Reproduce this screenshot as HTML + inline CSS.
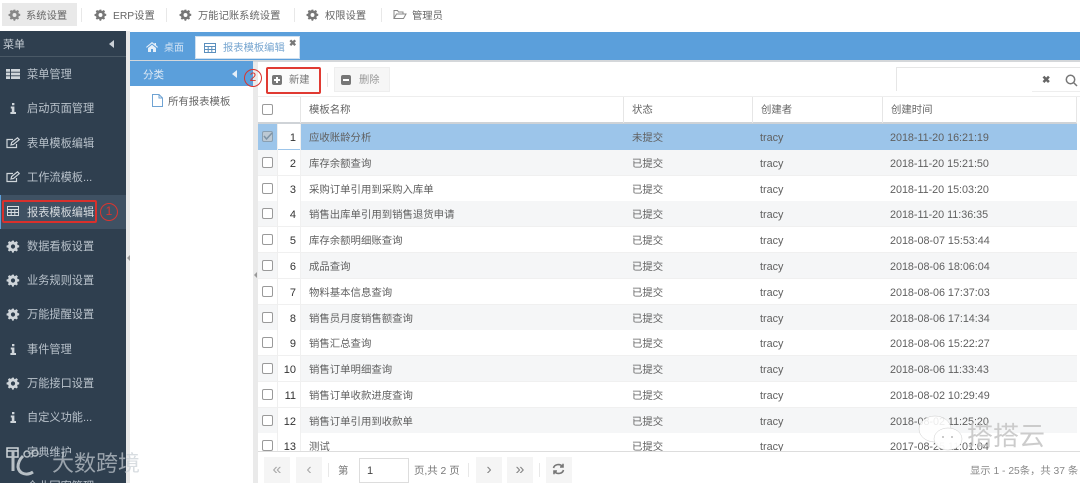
<!DOCTYPE html>
<html><head><meta charset="utf-8"><style>
html,body{margin:0;padding:0;width:1080px;height:483px;overflow:hidden;background:#fff}
#w{position:relative;width:1080px;height:483px;overflow:hidden;filter:blur(.35px);font:10.4px "Liberation Sans","Noto Sans CJK SC",sans-serif;color:#555}
#w div,#w svg,#w span.a{position:absolute}
.t{white-space:nowrap;line-height:14px}
.m{color:#666;font-size:10.3px;top:10px}
.sep{width:1px;height:14px;top:8px;background:#e8e8e8}
.s{left:27px;color:#b9c2cb;font-size:11.2px;white-space:nowrap;line-height:14px;transform:translateY(1px)}
.row{left:258px;width:819px;height:26px;background:#fff;border-bottom:1px solid #f0f0f0;box-sizing:border-box}
.row.e{background:#f5f6f7}
.cb{left:4px;top:7px;width:9px;height:9px;border:1px solid #9a9a9a;border-radius:2px;background:#fff}
.n{left:19px;width:19px;text-align:right;top:7px;color:#333;font-size:11px;line-height:14px}
.c{top:7px;line-height:14px;white-space:nowrap;color:#606060}
.c1{left:51px;top:8px}.c2{left:374px;top:8px}.c3{left:502px;font-size:10.8px}.c4{left:632px;font-size:10.8px;letter-spacing:-.03px}
.numcell{left:19px;top:0;width:23px;height:25px;background:#fff}
.th{top:97px;height:26px;line-height:27px;color:#666;white-space:nowrap}
.vl{top:97px;width:1px;height:26px;background:#e6e6e6}
.pb{top:457px;height:26px;background:#f5f5f5;color:#aaa;text-align:center;line-height:25px;font-size:16px}
.ci{border:1.300px solid #d9352f;border-radius:50%;color:#d9352f;text-align:center;box-sizing:border-box;width:18px;height:18px;line-height:15px;font-size:12px}
</style></head><body><div id="w">
<svg width="0" height="0" style="width:0;height:0"><defs>
<g id="g"><path fill-rule="evenodd" d="M4.200 0h1.600l.3 1.400 1-.4.9-.6 1.200 1.200-.7 1.100.5 1 1.300.3v1.700l-1.300.3-.5 1 .7 1.100-1.200 1.200-1.100-.7-1 .4-.3 1.300H4.200l-.3-1.300-1-.4-1.100.7L.6 8.200l.7-1.100-.5-1L-.5 5.800v-1.700l1.300-.3.5-1-.7-1.100L1.800.4l1.100.6 1-.4zM5 3.200a1.800 1.800 0 1 0 0 3.600 1.800 1.800 0 0 0 0-3.600z"/></g>
</defs></svg>

<!-- top menu -->
<div style="left:2px;top:3px;width:75px;height:23px;background:#e9e9e9"></div>
<svg style="left:8px;top:9px" width="13" height="12" viewBox="-1 0 12 10" fill="#888"><use href="#g"/></svg>
<div class="t m" style="left:26px">系统设置</div><div class="sep" style="left:81px"></div>
<svg style="left:94px;top:9px" width="13" height="12" viewBox="-1 0 12 10" fill="#777"><use href="#g"/></svg>
<div class="t m" style="left:113px">ERP设置</div><div class="sep" style="left:166px"></div>
<svg style="left:179px;top:9px" width="13" height="12" viewBox="-1 0 12 10" fill="#777"><use href="#g"/></svg>
<div class="t m" style="left:198px">万能记账系统设置</div><div class="sep" style="left:294px"></div>
<svg style="left:306px;top:9px" width="13" height="12" viewBox="-1 0 12 10" fill="#777"><use href="#g"/></svg>
<div class="t m" style="left:325px">权限设置</div><div class="sep" style="left:381px"></div>
<svg style="left:393px;top:9px" width="14" height="11" viewBox="0 0 14 11" fill="none" stroke="#888"><path d="M1 9.500V1.500h3.500l1 1.500h4.500v2M1 9.500h9.500l2.500-4.500H3.500z"/></svg>
<div class="t m" style="left:412px">管理员</div>

<!-- sidebar -->
<div style="left:0;top:31px;width:126px;height:452px;background:#2f3f4f"></div>
<div style="left:0;top:56px;width:126px;height:1px;background:#4a5966"></div>
<div class="t" style="left:3px;top:38px;color:#c5ccd3;font-size:11px">菜单</div>
<div style="left:109px;top:40px;width:0;height:0;border:4px solid transparent;border-right:5px solid #ccd2d8;border-left:0"></div>
<div style="left:126px;top:31px;width:4px;height:452px;background:#e9e9e9"></div>
<div style="left:127px;top:255px;width:0;height:0;border:3px solid transparent;border-right:3px solid #999;border-left:0"></div>
<div style="left:0;top:195px;width:126px;height:34px;background:#3f5163"></div>
<div style="left:0;top:195px;width:1px;height:34px;background:#5b9fdb"></div>

<svg style="left:6px;top:69px" width="14" height="10" viewBox="0 0 14 10" fill="#cfd5da"><path d="M0 0h4v2.800H0zM5 0h9v2.800H5zM0 3.600h4v2.800H0zM5 3.600h9v2.800H5zM0 7.200h4V10H0zM5 7.200h9V10H5z"/></svg>
<div class="s" style="top:67px">菜单管理</div>
<svg style="left:10px;top:103px" width="6" height="11" viewBox="0 0 6 11" fill="#cfd5da"><path d="M2 0h2.400v2.200H2zM.8 3.500h3.600v5.500H6v2H.4V9h1.400V5.500h-1z"/></svg>
<div class="s" style="top:101px">启动页面管理</div>
<svg style="left:6px;top:137px" width="14" height="12" viewBox="0 0 14 12" fill="none" stroke="#cfd5da" stroke-width="1.200"><path d="M10.500 7v3.500H1V2.500h6M5 8l.6-2.500L11.500.8l1.800 1.800-5.800 4.800z"/></svg>
<div class="s" style="top:136px">表单模板编辑</div>
<svg style="left:6px;top:171px" width="14" height="12" viewBox="0 0 14 12" fill="none" stroke="#cfd5da" stroke-width="1.200"><path d="M10.500 7v3.500H1V2.500h6M5 8l.6-2.500L11.500.8l1.800 1.800-5.800 4.800z"/></svg>
<div class="s" style="top:170px">工作流模板...</div>
<svg style="left:7px;top:206px" width="12" height="10" viewBox="0 0 12 10" fill="none" stroke="#d8dde1"><path d="M.5.500h11v9H.5zM.5 3.500h11M.5 6.500h11M4.200 3.500v6M7.800 3.500v6"/></svg>
<div class="s" style="top:205px;color:#d5dade">报表模板编辑</div>
<svg style="left:6px;top:240px" width="14" height="13" viewBox="-1 0 12 10" fill="#cfd5da"><use href="#g"/></svg>
<div class="s" style="top:239px">数据看板设置</div>
<svg style="left:6px;top:274px" width="14" height="13" viewBox="-1 0 12 10" fill="#cfd5da"><use href="#g"/></svg>
<div class="s" style="top:273px">业务规则设置</div>
<svg style="left:6px;top:308px" width="14" height="13" viewBox="-1 0 12 10" fill="#cfd5da"><use href="#g"/></svg>
<div class="s" style="top:307px">万能提醒设置</div>
<svg style="left:10px;top:344px" width="6" height="11" viewBox="0 0 6 11" fill="#cfd5da"><path d="M2 0h2.400v2.200H2zM.8 3.500h3.600v5.500H6v2H.4V9h1.400V5.500h-1z"/></svg>
<div class="s" style="top:342px">事件管理</div>
<svg style="left:6px;top:377px" width="14" height="13" viewBox="-1 0 12 10" fill="#cfd5da"><use href="#g"/></svg>
<div class="s" style="top:376px">万能接口设置</div>
<svg style="left:10px;top:412px" width="6" height="11" viewBox="0 0 6 11" fill="#cfd5da"><path d="M2 0h2.400v2.200H2zM.8 3.500h3.600v5.500H6v2H.4V9h1.400V5.500h-1z"/></svg>
<div class="s" style="top:410px">自定义功能...</div>
<svg style="left:6px;top:447px" width="13" height="11" viewBox="0 0 13 11" fill="none" stroke="#cfd5da" stroke-width="1.500"><path d="M1 1h11v9H1zM1 4h11"/></svg>
<div class="s" style="top:445px">字典维护</div>
<div class="s" style="top:479px">企业回密管理</div>

<div style="left:2px;top:200px;width:91px;height:19px;border:2px solid #d9302c;border-radius:2px"></div>
<div class="ci" style="left:100px;top:203px">1</div>

<!-- header tabs -->
<div style="left:130px;top:32px;width:950px;height:28px;background:#5b9fdb"></div>
<div style="left:130px;top:60px;width:950px;height:2px;background:#d4d7da"></div>
<svg style="left:146px;top:42px" width="12" height="10" viewBox="0 0 12 10" fill="#e6eff8"><path d="M6 0L0 5l.7.800L6 1.500l5.300 4.300.7-.8-2-1.700V1H8.500v1zM2 6v4h3V7h2v3h3V6L6 2.700z"/></svg>
<div class="t" style="left:164px;top:42px;color:#cfe1f3;font-size:10px">桌面</div>
<div style="left:195px;top:36px;width:105px;height:23px;background:#fff;border:1px solid #cfe0f0;box-sizing:border-box"></div>
<svg style="left:204px;top:43px" width="12" height="10" viewBox="0 0 12 10" fill="none" stroke="#5b8fbd"><path d="M.5.500h11v9H.5zM.5 3.500h11M.5 6.500h11M4.200 3.500v6M7.800 3.500v6"/></svg>
<div class="t" style="left:223px;top:42px;color:#76a5d0;font-size:10.3px">报表模板编辑</div>
<div class="t" style="left:289px;top:36px;color:#777;font-size:9px;font-weight:bold">✖</div>

<!-- category panel -->
<div style="left:130px;top:61px;width:123px;height:25px;background:#5b9fdb"></div>
<div class="t" style="left:143px;top:68px;color:#dfeaf5;font-size:10.5px">分类</div>
<div style="left:232px;top:70px;width:0;height:0;border:4px solid transparent;border-right:5px solid #e6eff8;border-left:0"></div>
<svg style="left:152px;top:94px" width="11" height="13" viewBox="0 0 11 13" fill="none" stroke="#6fa3d3"><path d="M.5.500h6.500l3.500 3.500v8.500H.5zM7 .500V4h3.500"/></svg>
<div class="t" style="left:168px;top:96px;color:#666">所有报表模板</div>
<div style="left:253px;top:62px;width:5px;height:421px;background:#eaeaea"></div>
<div style="left:254px;top:272px;width:0;height:0;border:3px solid transparent;border-right:3px solid #999;border-left:0"></div>

<!-- toolbar -->
<div style="left:266px;top:67px;width:51px;height:23px;border:2px solid #e03a32;border-radius:2px;background:#fbfbfb"></div>
<div class="ci" style="left:244px;top:69px">2</div>
<svg style="left:272px;top:75px" width="10" height="10" viewBox="0 0 10 10"><rect width="10" height="10" rx="2" fill="#777"/><path d="M4 2h2v2h2v2H6v2H4V6H2V4h2z" fill="#fff"/></svg>
<div class="t" style="left:289px;top:74px;color:#777;font-size:10.3px">新建</div>
<div class="sep" style="left:327px;top:73px"></div>
<div style="left:334px;top:67px;width:56px;height:25px;background:#f6f6f6;border:1px solid #eee;box-sizing:border-box"></div>
<svg style="left:341px;top:75px" width="10" height="10" viewBox="0 0 10 10"><rect width="10" height="10" rx="2" fill="#777"/><path d="M2 4h6v2H2z" fill="#fff"/></svg>
<div class="t" style="left:359px;top:74px;color:#999;font-size:10.3px">删除</div>
<div style="left:896px;top:67px;width:184px;height:24px;border-left:1px solid #e6e6e6;border-top:1px solid #e6e6e6;box-sizing:border-box"></div>
<div style="left:1032px;top:91px;width:48px;height:1px;background:#eee"></div>
<div class="t" style="left:1041px;top:73px;color:#666;font-size:10px;font-weight:bold;transform:translate(1px,1px)">✖</div>
<svg style="left:1065px;top:74px" width="13" height="13" viewBox="0 0 13 13" fill="none" stroke="#777" stroke-width="1.500"><circle cx="5.500" cy="5.500" r="4.200"/><path d="M8.500 8.500L12 12"/></svg>

<!-- table header -->
<div style="left:258px;top:96px;width:822px;height:1px;background:#eee"></div>
<div style="left:258px;top:122px;width:819px;height:2px;background:#cfd3d7"></div>
<div class="cb" style="left:262px;top:104px"></div>
<div class="vl" style="left:300px"></div><div class="vl" style="left:623px"></div><div class="vl" style="left:752px"></div><div class="vl" style="left:882px"></div><div class="vl" style="left:1076px"></div>
<div class="th" style="left:309px">模板名称</div><div class="th" style="left:632px">状态</div><div class="th" style="left:761px">创建者</div><div class="th" style="left:891px">创建时间</div>

<!-- rows -->
<div class="row" style="top:124px;background:#9cc5ea;border:0"><div class="cb" style="background:#bcc9d4;border-color:#8aa0b2"></div><svg style="left:5px;top:8px" width="10" height="9" viewBox="0 0 10 9" fill="none" stroke="#7d93a6" stroke-width="1.500"><path d="M1 4l2.500 3L9 1"/></svg><div class="numcell"></div><div class="n">1</div><div class="c c1">应收账龄分析</div><div class="c c2">未提交</div><div class="c c3">tracy</div><div class="c c4">2018-11-20 16:21:19</div></div>
<div class="row e" style="top:150px"><div class="cb"></div><div class="numcell"></div><div class="n">2</div><div class="c c1">库存余额查询</div><div class="c c2">已提交</div><div class="c c3">tracy</div><div class="c c4">2018-11-20 15:21:50</div></div>
<div class="row" style="top:176px"><div class="cb"></div><div class="numcell"></div><div class="n">3</div><div class="c c1">采购订单引用到采购入库单</div><div class="c c2">已提交</div><div class="c c3">tracy</div><div class="c c4">2018-11-20 15:03:20</div></div>
<div class="row e" style="top:201px"><div class="cb"></div><div class="numcell"></div><div class="n">4</div><div class="c c1">销售出库单引用到销售退货申请</div><div class="c c2">已提交</div><div class="c c3">tracy</div><div class="c c4">2018-11-20 11:36:35</div></div>
<div class="row" style="top:227px"><div class="cb"></div><div class="numcell"></div><div class="n">5</div><div class="c c1">库存余额明细账查询</div><div class="c c2">已提交</div><div class="c c3">tracy</div><div class="c c4">2018-08-07 15:53:44</div></div>
<div class="row e" style="top:253px"><div class="cb"></div><div class="numcell"></div><div class="n">6</div><div class="c c1">成品查询</div><div class="c c2">已提交</div><div class="c c3">tracy</div><div class="c c4">2018-08-06 18:06:04</div></div>
<div class="row" style="top:279px"><div class="cb"></div><div class="numcell"></div><div class="n">7</div><div class="c c1">物料基本信息查询</div><div class="c c2">已提交</div><div class="c c3">tracy</div><div class="c c4">2018-08-06 17:37:03</div></div>
<div class="row e" style="top:305px"><div class="cb"></div><div class="numcell"></div><div class="n">8</div><div class="c c1">销售员月度销售额查询</div><div class="c c2">已提交</div><div class="c c3">tracy</div><div class="c c4">2018-08-06 17:14:34</div></div>
<div class="row" style="top:330px"><div class="cb"></div><div class="numcell"></div><div class="n">9</div><div class="c c1">销售汇总查询</div><div class="c c2">已提交</div><div class="c c3">tracy</div><div class="c c4">2018-08-06 15:22:27</div></div>
<div class="row e" style="top:356px"><div class="cb"></div><div class="numcell"></div><div class="n">10</div><div class="c c1">销售订单明细查询</div><div class="c c2">已提交</div><div class="c c3">tracy</div><div class="c c4">2018-08-06 11:33:43</div></div>
<div class="row" style="top:382px"><div class="cb"></div><div class="numcell"></div><div class="n">11</div><div class="c c1">销售订单收款进度查询</div><div class="c c2">已提交</div><div class="c c3">tracy</div><div class="c c4">2018-08-02 10:29:49</div></div>
<div class="row e" style="top:408px"><div class="cb"></div><div class="numcell"></div><div class="n">12</div><div class="c c1">销售订单引用到收款单</div><div class="c c2">已提交</div><div class="c c3">tracy</div><div class="c c4">2018-08-02 11:25:20</div></div>
<div class="row" style="top:433px;height:19px;overflow:hidden"><div class="cb"></div><div class="numcell"></div><div class="n">13</div><div class="c c1">测试</div><div class="c c2">已提交</div><div class="c c3">tracy</div><div class="c c4">2017-08-25 11:01:04</div></div>
<div style="left:277px;top:124px;width:1px;height:328px;background:#efefef"></div>
<div style="left:300px;top:124px;width:1px;height:328px;background:#f0f0f0"></div>

<!-- footer -->
<div style="left:258px;top:451px;width:822px;height:1px;background:#ddd"></div>
<div class="pb" style="left:264px;width:26px">«</div>
<div class="pb" style="left:296px;width:26px">‹</div>
<div class="sep" style="left:328px;top:463px"></div>
<div class="t" style="left:338px;top:465px;color:#777">第</div>
<div style="left:359px;top:458px;width:50px;height:25px;border:1px solid #ddd;box-sizing:border-box;background:#fff"></div>
<div class="t" style="left:367px;top:464px;color:#444;font-size:11px">1</div>
<div class="t" style="left:414px;top:465px;color:#777">页,共 2 页</div>
<div class="sep" style="left:468px;top:463px"></div>
<div class="pb" style="left:476px;width:26px;color:#888">›</div>
<div class="pb" style="left:507px;width:26px;color:#888">»</div>
<div class="sep" style="left:539px;top:463px"></div>
<div class="pb" style="left:546px;width:26px"></div>
<svg style="left:552px;top:463px" width="13" height="12" viewBox="0 0 13 12" fill="none" stroke="#777" stroke-width="1.600"><path d="M1.500 5a5 4.500 0 0 1 9-1.500M11.500 7a5 4.500 0 0 1-9 1.500M11 .8v3.200H8M2 11.200V8h3"/></svg>
<div class="t" style="left:970px;top:465px;color:#888;font-size:10.3px">显示 1 - 25条，共 37 条</div>

<!-- watermarks -->
<svg style="left:9px;top:448px" width="36" height="30" viewBox="0 0 36 30" fill="none" stroke="#b8c0c6" stroke-width="3"><path d="M4 3v20M24 24c-6 4-14 2-15-5 0-5 2-8 5-11"/><circle cx="18" cy="6" r="3" stroke-width="1.500"/><circle cx="26" cy="5" r="3" stroke-width="1.500"/></svg>
<div class="t" style="left:52px;top:451px;color:rgba(200,207,212,.7);font-size:22px;line-height:26px">大数跨境</div>
<svg style="left:917px;top:413px" width="50" height="42" viewBox="0 0 50 42"><ellipse cx="18" cy="16" rx="16" ry="13" fill="#fff" fill-opacity=".88" stroke="#ccc" stroke-width=".5"/><ellipse cx="31" cy="26" rx="14" ry="11" fill="#fff" fill-opacity=".95" stroke="#ccc" stroke-width=".5"/><circle cx="26" cy="24" r="1" fill="#bbb"/><circle cx="35" cy="24" r="1" fill="#bbb"/></svg>
<div class="t" style="left:967px;top:422px;color:rgba(195,195,195,.85);font-size:26px;line-height:28px">搭搭云</div>
</div></body></html>
